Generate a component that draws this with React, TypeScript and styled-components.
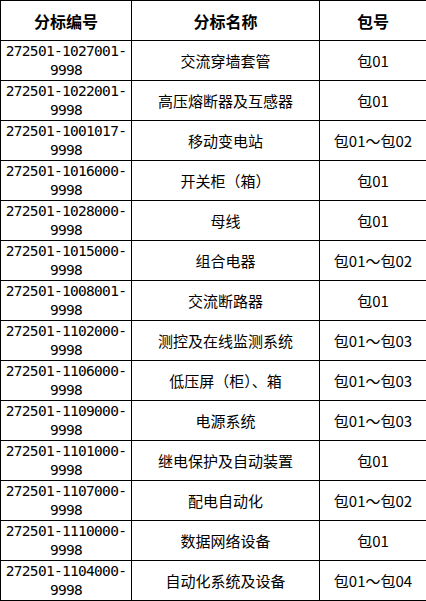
import React from "react";
import styled, { createGlobalStyle } from "styled-components";

const Global = createGlobalStyle`
  html, body { margin: 0; padding: 0; background: #ffffff; }
  body { font-family: "Noto Sans CJK SC", "Liberation Sans", sans-serif; color: #000; }
`;

const Table = styled.table`
  width: 426px;
  table-layout: fixed;
  border-collapse: collapse;
  border: 1px solid #000;
`;

const Col = styled.col<{ $w: number }>`
  width: ${(p) => p.$w}px;
`;

const Row = styled.tr`
  height: 40px;
`;

const HeadCell = styled.th`
  border: 1px solid #000;
  padding: 0;
  font-family: "Noto Sans CJK SC", sans-serif;
  font-weight: 700;
  font-size: 16px;
  line-height: 20px;
  text-align: center;
  vertical-align: middle;
`;

const Cell = styled.td`
  border: 1px solid #000;
  padding: 0;
  font-family: "Noto Sans CJK SC", "Liberation Serif", sans-serif;
  font-size: 15px;
  line-height: 19px;
  text-align: center;
  vertical-align: middle;
  white-space: nowrap;
  overflow: hidden;
`;

const CodeCell = styled(Cell)`
  font-family: "DejaVu Sans Mono", "Liberation Mono", monospace;
  font-size: 14.5px;
  letter-spacing: -0.7px;
  line-height: 19px;
  padding-top: 1px;
`;

type Item = { code: string; name: string; pack: string };

const items: Item[] = [
  { code: "272501-1027001-9998", name: "交流穿墙套管", pack: "包01" },
  { code: "272501-1022001-9998", name: "高压熔断器及互感器", pack: "包01" },
  { code: "272501-1001017-9998", name: "移动变电站", pack: "包01～包02" },
  { code: "272501-1016000-9998", name: "开关柜（箱）", pack: "包01" },
  { code: "272501-1028000-9998", name: "母线", pack: "包01" },
  { code: "272501-1015000-9998", name: "组合电器", pack: "包01～包02" },
  { code: "272501-1008001-9998", name: "交流断路器", pack: "包01" },
  { code: "272501-1102000-9998", name: "测控及在线监测系统", pack: "包01～包03" },
  { code: "272501-1106000-9998", name: "低压屏（柜）、箱", pack: "包01～包03" },
  { code: "272501-1109000-9998", name: "电源系统", pack: "包01～包03" },
  { code: "272501-1101000-9998", name: "继电保护及自动装置", pack: "包01" },
  { code: "272501-1107000-9998", name: "配电自动化", pack: "包01～包02" },
  { code: "272501-1110000-9998", name: "数据网络设备", pack: "包01" },
  { code: "272501-1104000-9998", name: "自动化系统及设备", pack: "包01～包04" },
];

function splitCode(code: string): [string, string] {
  const i = code.lastIndexOf("-");
  return [code.slice(0, i + 1), code.slice(i + 1)];
}

export default function App() {
  return (
    <>
      <Global />
      <Table>
        <colgroup>
          <Col $w={131} />
          <Col $w={188} />
          <Col $w={107} />
        </colgroup>
        <thead>
          <Row>
            <HeadCell>分标编号</HeadCell>
            <HeadCell>分标名称</HeadCell>
            <HeadCell>包号</HeadCell>
          </Row>
        </thead>
        <tbody>
          {items.map((it) => {
            const [a, b] = splitCode(it.code);
            return (
              <Row key={it.code}>
                <CodeCell>
                  {a}
                  <br />
                  {b}
                </CodeCell>
                <Cell>{it.name}</Cell>
                <Cell>{it.pack}</Cell>
              </Row>
            );
          })}
        </tbody>
      </Table>
    </>
  );
}
